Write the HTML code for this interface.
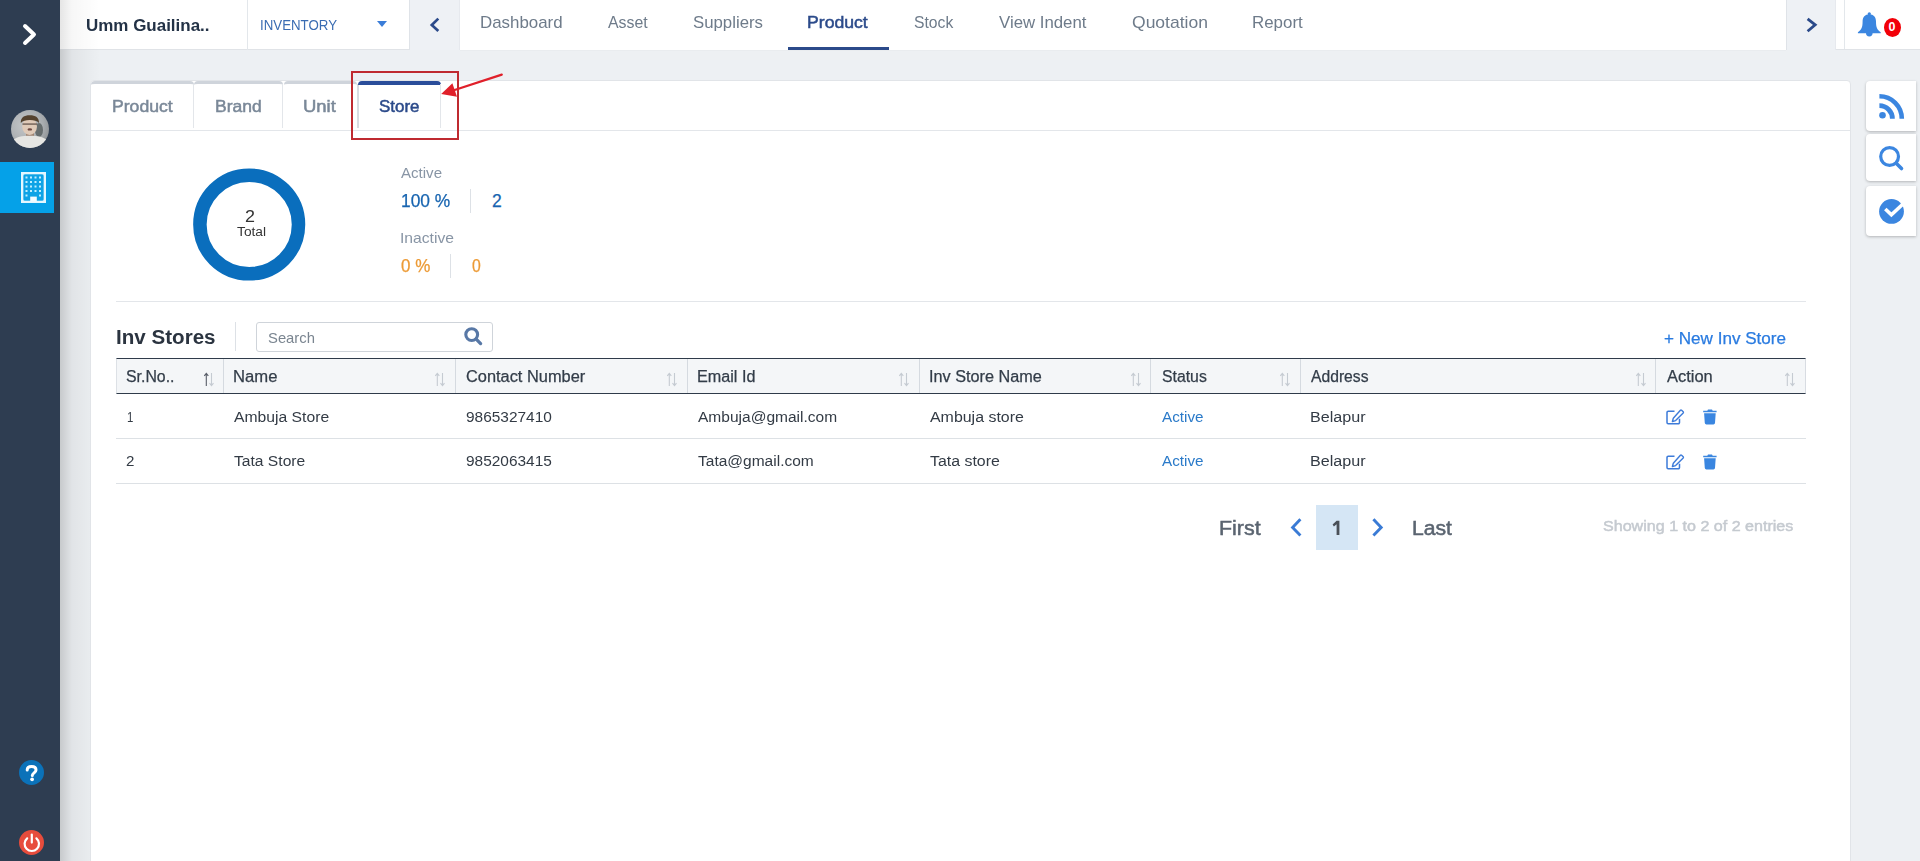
<!DOCTYPE html>
<html><head><meta charset="utf-8"><title>Inv Stores</title>
<style>
html,body{margin:0;padding:0;}
body{width:1920px;height:861px;overflow:hidden;position:relative;background:#edf0f3;font-family:"Liberation Sans",sans-serif;}
.a{position:absolute;box-sizing:border-box;}
.t{position:absolute;white-space:nowrap;transform-origin:0 0;}
svg{position:absolute;overflow:visible;}
</style></head><body>
<!-- sidebar shadow -->
<div class="a" style="left:60px;top:0;width:40px;height:861px;background:linear-gradient(to right,rgba(0,0,0,0.16),rgba(0,0,0,0.05) 30%,rgba(0,0,0,0) 100%);"></div>
<!-- header -->
<div class="a" style="left:60px;top:0;width:1860px;height:50px;background:#fff;border-bottom:1px solid #e0e3e7;"></div>
<div class="a" style="left:460px;top:0;width:1326px;height:51px;background:#fff;border-bottom:1px solid #e9ecef;"></div>
<div class="a" style="left:60px;top:0;width:40px;height:50px;background:linear-gradient(to right,rgba(0,0,0,0.10),rgba(0,0,0,0.03) 30%,rgba(0,0,0,0) 100%);"></div>
<div class="a" style="left:247px;top:0;width:1px;height:50px;background:#e3e7eb;"></div>
<div class="a" style="left:409px;top:0;width:51px;height:50px;background:#eef1f5;border-left:1px solid #dfe3e8;border-right:1px solid #e6e9ee;"></div>
<div class="a" style="left:1786px;top:0;width:50px;height:50px;background:#eef1f5;border-left:1px solid #dfe3e8;border-right:1px solid #e6e9ee;"></div>
<div class="a" style="left:1844px;top:0;width:1px;height:49px;background:#e3e7eb;"></div>
<div class="a" style="left:788px;top:47px;width:101px;height:3px;background:#2b4a8a;"></div>
<svg style="left:377px;top:21px" width="10" height="6"><path d="M0 0H10L5 6Z" fill="#3b7dd8"/></svg>
<svg style="left:429px;top:17px" width="14" height="17"><path d="M9.3 1.6L2.8 8L9.3 14" fill="none" stroke="#2b4a8a" stroke-width="2.7" stroke-linejoin="miter"/></svg>
<svg style="left:1805px;top:17px" width="14" height="17"><path d="M2.6 1.8L10.2 7.8L2.6 14.2" fill="none" stroke="#2b4a8a" stroke-width="2.8" stroke-linejoin="miter"/></svg>
<!-- bell -->
<svg style="left:1857px;top:11px" width="26" height="28" viewBox="0 0 26 28"><circle cx="12.3" cy="2.8" r="1.6" fill="#3b86e0"/><path d="M12.3 3.3C16.6 3.3 19 6.3 19 10.5C19 16.2 20 18.6 23.7 21.2V22.3H0.9V21.2C4.6 18.6 5.6 16.2 5.6 10.5C5.6 6.3 8 3.3 12.3 3.3Z" fill="#3b86e0"/><path d="M9 22H15.6A3.3 3.4 0 0 1 9 22Z" fill="#3b86e0"/></svg>
<div class="a" style="left:1884px;top:18px;width:17px;height:19px;border-radius:50%;background:#f20008;"></div>
<span class="t" style="left:1888.6px;top:19.7px;font-size:12.5px;line-height:14px;color:#fff;font-weight:bold;">0</span>
<!-- sidebar -->
<div class="a" style="left:0;top:0;width:60px;height:861px;background:#2e3d51;"></div>
<svg style="left:20px;top:21px" width="20" height="27"><path d="M5 5L14 13.5L5 22" fill="none" stroke="#fff" stroke-width="4" stroke-linecap="round" stroke-linejoin="round"/></svg>
<!-- avatar -->
<svg style="left:11px;top:110px" width="38" height="38" viewBox="0 0 38 38">
 <defs><clipPath id="av"><circle cx="19" cy="19" r="19"/></clipPath><filter id="bl" x="-20%" y="-20%" width="140%" height="140%"><feGaussianBlur stdDeviation="0.6"/></filter>
 <radialGradient id="avbg" cx="35%" cy="40%" r="70%"><stop offset="0" stop-color="#c3c6c8"/><stop offset="0.7" stop-color="#a9adb0"/><stop offset="1" stop-color="#8f9396"/></radialGradient></defs>
 <g clip-path="url(#av)">
  <rect width="38" height="38" fill="url(#avbg)"/>
  <g filter="url(#bl)">
   <ellipse cx="28" cy="20" rx="4" ry="7" fill="#4f5557" opacity=".75"/>
   <rect x="15" y="20" width="8" height="7" fill="#9d8270"/>
   <ellipse cx="18.6" cy="16.5" rx="7.4" ry="8.4" fill="#e0cab8"/>
   <path d="M9.8 13C9.5 7.5 13 5.2 18.8 5.2S28.2 7.5 28 13C26 10.6 23 9.9 18.8 9.9S11.8 10.6 9.8 13z" fill="#54432f"/>
   <rect x="11.5" y="13.2" width="14.5" height="1.8" fill="#6a5a50" opacity=".75"/>
   <ellipse cx="18.8" cy="19.4" rx="2.3" ry="1.2" fill="#6e4a42"/>
   <path d="M1 31C5 27 11 25.8 18.8 25.8S33 27 37 31V40H1z" fill="#e6e6e3"/>
  </g>
 </g>
</svg>
<div class="a" style="left:0;top:162px;width:54px;height:51px;background:#05a1e8;"></div>
<svg style="left:21px;top:172px" width="25" height="31" viewBox="0 0 25 31">
  <rect x="1.3" y="1.3" width="22.4" height="28.4" fill="none" stroke="#e4f7ff" stroke-width="2.6"/><rect x="2.6" y="2.6" width="19.8" height="25.8" rx="1.5" fill="#0ea3e6"/>
  <g fill="#bfeeff">
    <rect x="4.5" y="4.5" width="2" height="2"/><rect x="9" y="4.5" width="2" height="2"/><rect x="13.5" y="4.5" width="2" height="2"/><rect x="18" y="4.5" width="2" height="2"/>
    <rect x="4.5" y="9" width="2" height="2"/><rect x="9" y="9" width="2" height="2"/><rect x="13.5" y="9" width="2" height="2"/><rect x="18" y="9" width="2" height="2"/>
    <rect x="4.5" y="13.5" width="2" height="2"/><rect x="9" y="13.5" width="2" height="2"/><rect x="13.5" y="13.5" width="2" height="2"/><rect x="18" y="13.5" width="2" height="2"/>
    <rect x="4.5" y="18" width="2" height="2"/><rect x="9" y="18" width="2" height="2"/><rect x="13.5" y="18" width="2" height="2"/><rect x="18" y="18" width="2" height="2"/>
    <rect x="4.5" y="22.5" width="2" height="2"/><rect x="18" y="22.5" width="2" height="2"/>
    <rect x="9.2" y="24.6" width="6.6" height="5" fill="#f4fcff"/>
  </g>
</svg>
<div class="a" style="left:18.7px;top:759.8px;width:25.5px;height:25.5px;border-radius:50%;background:#0b72b9;"></div>
<svg style="left:18.7px;top:759.8px" width="26" height="26" viewBox="0 0 26 26"><path d="M8.2 10C8.2 7.3 10.2 6.4 12.6 6.4S17 7.6 17 10C17 12.8 13.3 13 13.3 15.6" fill="none" stroke="#fff" stroke-width="3" stroke-linecap="round"/><circle cx="13.1" cy="19.3" r="1.9" fill="#fff"/></svg>
<div class="a" style="left:18.7px;top:829.9px;width:25.5px;height:25.5px;border-radius:50%;background:#e74c3c;"></div>
<svg style="left:18.7px;top:829.9px" width="26" height="26" viewBox="0 0 26 26"><path d="M8.17 8.3A7.2 7.2 0 1 0 17.43 8.3" fill="none" stroke="#fff" stroke-width="2.2" stroke-linecap="round"/><path d="M12.8 4.6V12.6" stroke="#fff" stroke-width="2.2" stroke-linecap="round"/></svg>

<!-- card -->
<div class="a" style="left:90px;top:80px;width:1761px;height:800px;background:#fff;border:1px solid #e1e4e8;border-radius:4px 4px 0 0;"></div>
<!-- tabs -->
<div class="a" style="left:91px;top:81px;width:102.5px;height:48px;border-top:3px solid #cfd4db;border-radius:4px 4px 0 0;"></div>
<div class="a" style="left:194px;top:81px;width:88.5px;height:48px;border-top:3px solid #cfd4db;border-radius:4px 4px 0 0;"></div>
<div class="a" style="left:283.5px;top:81px;width:73.5px;height:48px;border-top:3px solid #cfd4db;border-radius:4px 4px 0 0;"></div>
<div class="a" style="left:193px;top:84px;width:1px;height:44px;background:#e3e6ea;"></div>
<div class="a" style="left:282px;top:84px;width:1px;height:44px;background:#e3e6ea;"></div>
<div class="a" style="left:357px;top:84px;width:2px;height:44px;background:#d8dce1;"></div>
<div class="a" style="left:358px;top:81px;width:82.5px;height:4px;background:#2a4d9a;border-radius:4px 4px 0 0;"></div>
<div class="a" style="left:440px;top:84px;width:1px;height:44px;background:#e3e6ea;"></div>
<div class="a" style="left:91px;top:130px;width:1759px;height:1px;background:#e3e6ea;"></div>

<!-- donut -->
<svg style="left:193px;top:168px" width="113" height="113" viewBox="0 0 113 113"><circle cx="56.2" cy="56.5" r="49.3" fill="none" stroke="#0a6ebd" stroke-width="13.5"/></svg>
<div class="a" style="left:470px;top:189px;width:1px;height:24px;background:#dde1e6;"></div>
<div class="a" style="left:450px;top:254px;width:1px;height:24px;background:#dde1e6;"></div>
<div class="a" style="left:116px;top:301px;width:1690px;height:1px;background:#e3e6ea;"></div>

<!-- toolbar -->
<div class="a" style="left:235px;top:322px;width:1px;height:29px;background:#dde1e6;"></div>
<div class="a" style="left:256px;top:322px;width:237px;height:30px;border:1px solid #cfd4da;border-radius:3px;background:#fff;"></div>
<svg style="left:463px;top:327px" width="20" height="20" viewBox="0 0 20 20"><circle cx="8.7" cy="7.6" r="5.9" fill="none" stroke="#5878a6" stroke-width="3.1"/><path d="M13.2 12.1L17.6 16.6" stroke="#5878a6" stroke-width="3.3" stroke-linecap="round"/></svg>

<!-- table -->
<div class="a" style="left:116px;top:358px;width:1690px;height:36px;background:#f4f6f8;border-top:1px solid #2f3b4a;border-bottom:1px solid #2f3b4a;border-left:1px solid #dde1e6;border-right:1px solid #d8dce2;"></div>
<div class="a" style="left:223px;top:359px;width:1px;height:34px;background:#d5dae0;"></div>
<div class="a" style="left:455px;top:359px;width:1px;height:34px;background:#d5dae0;"></div>
<div class="a" style="left:687px;top:359px;width:1px;height:34px;background:#d5dae0;"></div>
<div class="a" style="left:919px;top:359px;width:1px;height:34px;background:#d5dae0;"></div>
<div class="a" style="left:1150px;top:359px;width:1px;height:34px;background:#d5dae0;"></div>
<div class="a" style="left:1300px;top:359px;width:1px;height:34px;background:#d5dae0;"></div>
<div class="a" style="left:1655px;top:359px;width:1px;height:34px;background:#d5dae0;"></div>
<div class="a" style="left:116px;top:438px;width:1690px;height:1px;background:#dde1e5;"></div>
<div class="a" style="left:116px;top:483px;width:1690px;height:1px;background:#dde1e5;"></div>
<svg style="left:204.1px;top:372px" width="11" height="15" viewBox="0 0 11 15"><path d="M2.3 1.5V14M0.3 3.8L2.3 1.3L4.3 3.8" fill="none" stroke="#585d68" stroke-width="1.1"/><path d="M7.5 1V13.5M5.5 11.2L7.5 13.7L9.5 11.2" fill="none" stroke="#c5cbd2" stroke-width="1.1"/></svg>
<svg style="left:434.5px;top:372px" width="11" height="15" viewBox="0 0 11 15"><path d="M2.3 1.5V14M0.3 3.8L2.3 1.3L4.3 3.8" fill="none" stroke="#c5cbd2" stroke-width="1.1"/><path d="M7.5 1V13.5M5.5 11.2L7.5 13.7L9.5 11.2" fill="none" stroke="#c5cbd2" stroke-width="1.1"/></svg>
<svg style="left:666.5px;top:372px" width="11" height="15" viewBox="0 0 11 15"><path d="M2.3 1.5V14M0.3 3.8L2.3 1.3L4.3 3.8" fill="none" stroke="#c5cbd2" stroke-width="1.1"/><path d="M7.5 1V13.5M5.5 11.2L7.5 13.7L9.5 11.2" fill="none" stroke="#c5cbd2" stroke-width="1.1"/></svg>
<svg style="left:898.7px;top:372px" width="11" height="15" viewBox="0 0 11 15"><path d="M2.3 1.5V14M0.3 3.8L2.3 1.3L4.3 3.8" fill="none" stroke="#c5cbd2" stroke-width="1.1"/><path d="M7.5 1V13.5M5.5 11.2L7.5 13.7L9.5 11.2" fill="none" stroke="#c5cbd2" stroke-width="1.1"/></svg>
<svg style="left:1130.8px;top:372px" width="11" height="15" viewBox="0 0 11 15"><path d="M2.3 1.5V14M0.3 3.8L2.3 1.3L4.3 3.8" fill="none" stroke="#c5cbd2" stroke-width="1.1"/><path d="M7.5 1V13.5M5.5 11.2L7.5 13.7L9.5 11.2" fill="none" stroke="#c5cbd2" stroke-width="1.1"/></svg>
<svg style="left:1280.0px;top:372px" width="11" height="15" viewBox="0 0 11 15"><path d="M2.3 1.5V14M0.3 3.8L2.3 1.3L4.3 3.8" fill="none" stroke="#c5cbd2" stroke-width="1.1"/><path d="M7.5 1V13.5M5.5 11.2L7.5 13.7L9.5 11.2" fill="none" stroke="#c5cbd2" stroke-width="1.1"/></svg>
<svg style="left:1635.5px;top:372px" width="11" height="15" viewBox="0 0 11 15"><path d="M2.3 1.5V14M0.3 3.8L2.3 1.3L4.3 3.8" fill="none" stroke="#c5cbd2" stroke-width="1.1"/><path d="M7.5 1V13.5M5.5 11.2L7.5 13.7L9.5 11.2" fill="none" stroke="#c5cbd2" stroke-width="1.1"/></svg>
<svg style="left:1785.0px;top:372px" width="11" height="15" viewBox="0 0 11 15"><path d="M2.3 1.5V14M0.3 3.8L2.3 1.3L4.3 3.8" fill="none" stroke="#c5cbd2" stroke-width="1.1"/><path d="M7.5 1V13.5M5.5 11.2L7.5 13.7L9.5 11.2" fill="none" stroke="#c5cbd2" stroke-width="1.1"/></svg>

<!-- action icons -->
<svg style="left:1666px;top:409.0px" width="19" height="16" viewBox="0 0 19 16"><path d="M8.5 2.3H2.2a1.2 1.2 0 0 0-1.2 1.2V13.6a1.2 1.2 0 0 0 1.2 1.2H12.3a1.2 1.2 0 0 0 1.2-1.2V9.8" fill="none" stroke="#3d7bd9" stroke-width="1.5"/><path d="M15.6 1.2l1.6 1.6a.9.9 0 0 1 0 1.2L9.6 11.6l-3.2.9.9-3.2L14.4 1.2a.9.9 0 0 1 1.2 0z" fill="none" stroke="#3d7bd9" stroke-width="1.4" stroke-linejoin="round"/></svg>
<svg style="left:1703px;top:409.0px" width="14" height="16" viewBox="0 0 14 16"><path d="M5 0.4h4l.7 1.3H13.6V3.3H0.2V1.7H4.3z" fill="#3a86e0"/><path d="M1.1 4.2H12.7L12 14a1.6 1.6 0 0 1-1.6 1.4H3.4A1.6 1.6 0 0 1 1.8 14z" fill="#3a86e0"/></svg>
<svg style="left:1666px;top:453.5px" width="19" height="16" viewBox="0 0 19 16"><path d="M8.5 2.3H2.2a1.2 1.2 0 0 0-1.2 1.2V13.6a1.2 1.2 0 0 0 1.2 1.2H12.3a1.2 1.2 0 0 0 1.2-1.2V9.8" fill="none" stroke="#3d7bd9" stroke-width="1.5"/><path d="M15.6 1.2l1.6 1.6a.9.9 0 0 1 0 1.2L9.6 11.6l-3.2.9.9-3.2L14.4 1.2a.9.9 0 0 1 1.2 0z" fill="none" stroke="#3d7bd9" stroke-width="1.4" stroke-linejoin="round"/></svg>
<svg style="left:1703px;top:453.5px" width="14" height="16" viewBox="0 0 14 16"><path d="M5 0.4h4l.7 1.3H13.6V3.3H0.2V1.7H4.3z" fill="#3a86e0"/><path d="M1.1 4.2H12.7L12 14a1.6 1.6 0 0 1-1.6 1.4H3.4A1.6 1.6 0 0 1 1.8 14z" fill="#3a86e0"/></svg>

<!-- pagination -->
<div class="a" style="left:1316px;top:505px;width:42px;height:45px;background:#d5e6f5;"></div>
<svg style="left:1289px;top:518px" width="16" height="19"><path d="M11.4 1.2L3.6 9.4L11.4 17.5" fill="none" stroke="#3a7bd5" stroke-width="2.9" stroke-linejoin="miter"/></svg>
<svg style="left:1370px;top:518px" width="16" height="19"><path d="M3.4 1.2L11.2 9.4L3.4 17.5" fill="none" stroke="#3a7bd5" stroke-width="2.9" stroke-linejoin="miter"/></svg>
<svg style="left:1330px;top:519px" width="12" height="18" viewBox="0 0 12 18"><path d="M6.6 1.8H9.4V16H6.6V5.2L3.9 7.4L2.6 5.6Z" fill="#4a5058"/></svg>

<!-- right floating buttons -->
<div class="a" style="left:1866px;top:81px;width:50px;height:50px;background:#fff;border-radius:4px 0 0 4px;box-shadow:0 1px 3px rgba(0,0,0,.25);"></div>
<div class="a" style="left:1866px;top:134px;width:50px;height:47px;background:#fff;border-radius:4px 0 0 4px;box-shadow:0 1px 3px rgba(0,0,0,.25);"></div>
<div class="a" style="left:1866px;top:186px;width:50px;height:50px;background:#fff;border-radius:4px 0 0 4px;box-shadow:0 1px 3px rgba(0,0,0,.25);"></div>
<svg style="left:1878px;top:93px" width="27" height="27" viewBox="0 0 27 27"><circle cx="4.5" cy="22.3" r="3.3" fill="#3b86e0"/><path d="M1.4 12.7A13 13 0 0 1 14.4 25.7" fill="none" stroke="#3b86e0" stroke-width="4.8"/><path d="M1.4 3.3A22.4 22.4 0 0 1 23.8 25.7" fill="none" stroke="#3b86e0" stroke-width="4.6"/></svg>
<svg style="left:1878px;top:145px" width="27" height="27" viewBox="0 0 27 27"><circle cx="11.6" cy="11.5" r="8.9" fill="none" stroke="#3b86e0" stroke-width="3.2"/><path d="M18.2 18.2L23.5 23.5" stroke="#3b86e0" stroke-width="3.6" stroke-linecap="round"/></svg>
<svg style="left:1878px;top:198px" width="27" height="27" viewBox="0 0 27 27"><circle cx="13.5" cy="13.4" r="12.4" fill="#3b86e0"/><path d="M8.6 12.2L13.4 16.8L25 6" fill="none" stroke="#fff" stroke-width="3.6" stroke-linecap="square"/></svg>

<!-- annotation -->
<div class="a" style="left:351px;top:71px;width:108px;height:69px;border:2.5px solid #bf2a30;"></div>
<svg style="left:0;top:0" width="1920" height="861"><path d="M501.8 74.6L450 91.5" stroke="#e0202a" stroke-width="2.2" stroke-linecap="round"/><path d="M441.2 94L452.4 83.2L457 96.8Z" fill="#e0202a"/></svg>

<span class="t" style="left:85.60px;top:16.51px;font-size:17px;line-height:17px;font-weight:bold;color:#233246;transform:scaleX(0.9982)">Umm Guailina..</span>
<span class="t" style="left:259.65px;top:18.15px;font-size:14px;line-height:14px;font-weight:normal;color:#3a6cb2;transform:scaleX(0.9489)">INVENTORY</span>
<span class="t" style="left:479.71px;top:13.51px;font-size:17px;line-height:17px;font-weight:normal;color:#6e7b8a;transform:scaleX(0.9937)">Dashboard</span>
<span class="t" style="left:608.00px;top:13.51px;font-size:17px;line-height:17px;font-weight:normal;color:#6e7b8a;transform:scaleX(0.9347)">Asset</span>
<span class="t" style="left:693.00px;top:13.51px;font-size:17px;line-height:17px;font-weight:normal;color:#6e7b8a;transform:scaleX(0.9876)">Suppliers</span>
<span class="t" style="left:806.96px;top:13.51px;font-size:17px;line-height:17px;font-weight:normal;color:#2b4a8a;-webkit-text-stroke:0.5px #2b4a8a;transform:scaleX(1.0369)">Product</span>
<span class="t" style="left:914.00px;top:13.51px;font-size:17px;line-height:17px;font-weight:normal;color:#6e7b8a;transform:scaleX(0.9241)">Stock</span>
<span class="t" style="left:999.00px;top:13.51px;font-size:17px;line-height:17px;font-weight:normal;color:#6e7b8a;transform:scaleX(0.9881)">View Indent</span>
<span class="t" style="left:1132.00px;top:13.51px;font-size:17px;line-height:17px;font-weight:normal;color:#6e7b8a;transform:scaleX(1.0305)">Quotation</span>
<span class="t" style="left:1252.01px;top:13.51px;font-size:17px;line-height:17px;font-weight:normal;color:#6e7b8a;transform:scaleX(0.9940)">Report</span>
<span class="t" style="left:111.63px;top:97.88px;font-size:16.5px;line-height:16.5px;font-weight:normal;color:#7a8898;-webkit-text-stroke:0.5px #7a8898;transform:scaleX(1.0679)">Product</span>
<span class="t" style="left:214.64px;top:97.88px;font-size:16.5px;line-height:16.5px;font-weight:normal;color:#7a8898;-webkit-text-stroke:0.5px #7a8898;transform:scaleX(1.0594)">Brand</span>
<span class="t" style="left:302.88px;top:97.88px;font-size:16.5px;line-height:16.5px;font-weight:normal;color:#7a8898;-webkit-text-stroke:0.5px #7a8898;transform:scaleX(1.1197)">Unit</span>
<span class="t" style="left:378.90px;top:97.78px;font-size:16.5px;line-height:16.5px;font-weight:normal;color:#2b4a8a;-webkit-text-stroke:0.5px #2b4a8a;transform:scaleX(1.0265)">Store</span>
<span class="t" style="left:244.50px;top:208.41px;font-size:17px;line-height:17px;font-weight:normal;color:#333;transform:scaleX(1.0556)">2</span>
<span class="t" style="left:237.20px;top:226.42px;font-size:12.5px;line-height:12.5px;font-weight:normal;color:#333;transform:scaleX(1.1004)">Total</span>
<span class="t" style="left:401.30px;top:165.20px;font-size:15px;line-height:15px;font-weight:normal;color:#8895a5;transform:scaleX(1.0048)">Active</span>
<span class="t" style="left:401.31px;top:193.28px;font-size:17.5px;line-height:17.5px;font-weight:normal;color:#1764b0;-webkit-text-stroke:0.25px #1764b0;transform:scaleX(0.9925)">100 %</span>
<span class="t" style="left:492.10px;top:193.28px;font-size:17.5px;line-height:17.5px;font-weight:normal;color:#1764b0;-webkit-text-stroke:0.25px #1764b0;transform:scaleX(1.0000)">2</span>
<span class="t" style="left:400.26px;top:230.10px;font-size:15px;line-height:15px;font-weight:normal;color:#8895a5;transform:scaleX(1.0446)">Inactive</span>
<span class="t" style="left:401.30px;top:258.18px;font-size:17.5px;line-height:17.5px;font-weight:normal;color:#ec9a35;-webkit-text-stroke:0.25px #ec9a35;transform:scaleX(0.9698)">0 %</span>
<span class="t" style="left:471.80px;top:258.18px;font-size:17.5px;line-height:17.5px;font-weight:normal;color:#ec9a35;-webkit-text-stroke:0.25px #ec9a35;transform:scaleX(0.9000)">0</span>
<span class="t" style="left:115.57px;top:326.82px;font-size:20px;line-height:20px;font-weight:bold;color:#2b3440;transform:scaleX(1.0295)">Inv Stores</span>
<span class="t" style="left:267.80px;top:330.30px;font-size:15px;line-height:15px;font-weight:normal;color:#7a8590;transform:scaleX(0.9876)">Search</span>
<span class="t" style="left:1663.50px;top:330.30px;font-size:16.3px;line-height:16.3px;font-weight:normal;color:#2a7be0;-webkit-text-stroke:0.25px #2a7be0;transform:scaleX(1.0497)">+ New Inv Store</span>
<span class="t" style="left:126.30px;top:368.59px;font-size:15.6px;line-height:15.6px;font-weight:normal;color:#333d49;-webkit-text-stroke:0.25px #333d49;transform:scaleX(1.0166)">Sr.No..</span>
<span class="t" style="left:233.43px;top:368.59px;font-size:15.6px;line-height:15.6px;font-weight:normal;color:#333d49;-webkit-text-stroke:0.25px #333d49;transform:scaleX(1.0670)">Name</span>
<span class="t" style="left:466.25px;top:368.59px;font-size:15.6px;line-height:15.6px;font-weight:normal;color:#333d49;-webkit-text-stroke:0.25px #333d49;transform:scaleX(1.0499)">Contact Number</span>
<span class="t" style="left:697.26px;top:368.59px;font-size:15.6px;line-height:15.6px;font-weight:normal;color:#333d49;-webkit-text-stroke:0.25px #333d49;transform:scaleX(1.0374)">Email Id</span>
<span class="t" style="left:928.96px;top:368.59px;font-size:15.6px;line-height:15.6px;font-weight:normal;color:#333d49;-webkit-text-stroke:0.25px #333d49;transform:scaleX(1.0407)">Inv Store Name</span>
<span class="t" style="left:1161.70px;top:368.59px;font-size:15.6px;line-height:15.6px;font-weight:normal;color:#333d49;-webkit-text-stroke:0.25px #333d49;transform:scaleX(1.0133)">Status</span>
<span class="t" style="left:1311.00px;top:368.59px;font-size:15.6px;line-height:15.6px;font-weight:normal;color:#333d49;-webkit-text-stroke:0.25px #333d49;transform:scaleX(1.0051)">Address</span>
<span class="t" style="left:1666.80px;top:368.59px;font-size:15.6px;line-height:15.6px;font-weight:normal;color:#333d49;-webkit-text-stroke:0.25px #333d49;transform:scaleX(1.0547)">Action</span>
<span class="t" style="left:126.66px;top:408.95px;font-size:15.3px;line-height:15.3px;font-weight:normal;color:#333b45;transform:scaleX(0.7429)">1</span>
<span class="t" style="left:234.40px;top:408.95px;font-size:15.3px;line-height:15.3px;font-weight:normal;color:#333b45;transform:scaleX(1.0264)">Ambuja Store</span>
<span class="t" style="left:466.25px;top:408.95px;font-size:15.3px;line-height:15.3px;font-weight:normal;color:#333b45;transform:scaleX(1.0093)">9865327410</span>
<span class="t" style="left:698.30px;top:408.95px;font-size:15.3px;line-height:15.3px;font-weight:normal;color:#333b45;transform:scaleX(1.0150)">Ambuja@gmail.com</span>
<span class="t" style="left:930.00px;top:408.95px;font-size:15.3px;line-height:15.3px;font-weight:normal;color:#333b45;transform:scaleX(1.0411)">Ambuja store</span>
<span class="t" style="left:1161.70px;top:408.95px;font-size:15.3px;line-height:15.3px;font-weight:normal;color:#2a7ac9;transform:scaleX(0.9964)">Active</span>
<span class="t" style="left:1309.95px;top:408.95px;font-size:15.3px;line-height:15.3px;font-weight:normal;color:#333b45;transform:scaleX(1.0536)">Belapur</span>
<span class="t" style="left:126.30px;top:453.25px;font-size:15.3px;line-height:15.3px;font-weight:normal;color:#333b45;transform:scaleX(0.9875)">2</span>
<span class="t" style="left:234.00px;top:453.25px;font-size:15.3px;line-height:15.3px;font-weight:normal;color:#333b45;transform:scaleX(1.0214)">Tata Store</span>
<span class="t" style="left:466.25px;top:453.25px;font-size:15.3px;line-height:15.3px;font-weight:normal;color:#333b45;transform:scaleX(1.0093)">9852063415</span>
<span class="t" style="left:698.30px;top:453.25px;font-size:15.3px;line-height:15.3px;font-weight:normal;color:#333b45;transform:scaleX(1.0141)">Tata@gmail.com</span>
<span class="t" style="left:930.00px;top:453.25px;font-size:15.3px;line-height:15.3px;font-weight:normal;color:#333b45;transform:scaleX(1.0396)">Tata store</span>
<span class="t" style="left:1161.70px;top:453.25px;font-size:15.3px;line-height:15.3px;font-weight:normal;color:#2a7ac9;transform:scaleX(0.9964)">Active</span>
<span class="t" style="left:1309.95px;top:453.25px;font-size:15.3px;line-height:15.3px;font-weight:normal;color:#333b45;transform:scaleX(1.0536)">Belapur</span>
<span class="t" style="left:1218.93px;top:518.07px;font-size:20px;line-height:20px;font-weight:normal;color:#5a6470;-webkit-text-stroke:0.5px #5a6470;transform:scaleX(1.0699)">First</span>
<span class="t" style="left:1412.24px;top:518.07px;font-size:20px;line-height:20px;font-weight:normal;color:#5a6470;-webkit-text-stroke:0.5px #5a6470;transform:scaleX(1.0578)">Last</span>
<span class="t" style="left:1602.70px;top:518.08px;font-size:15.5px;line-height:15.5px;font-weight:normal;color:#c5cad0;-webkit-text-stroke:0.5px #c5cad0;transform:scaleX(1.0371)">Showing 1 to 2 of 2 entries</span>
</body></html>
